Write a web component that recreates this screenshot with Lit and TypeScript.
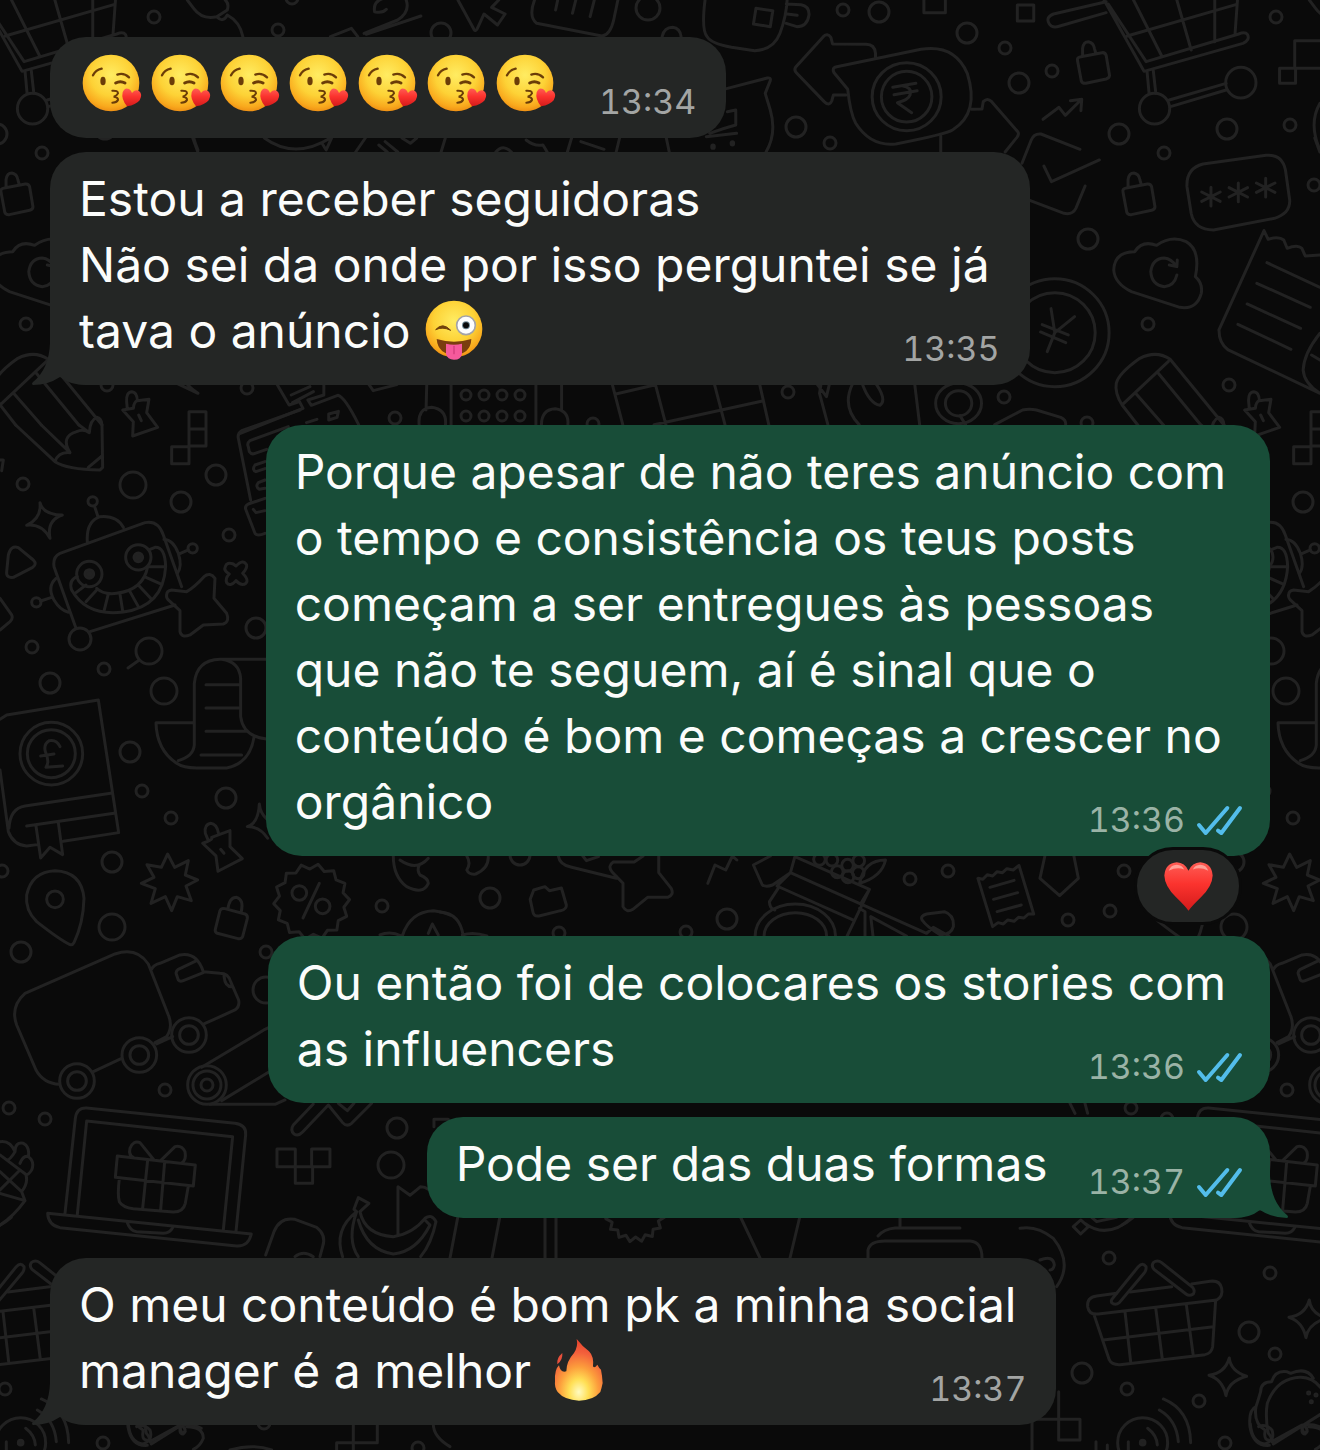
import { LitElement, html, svg, css } from "lit";
import { customElement } from "lit/decorators.js";

type Side = "in" | "out";

interface Message {
  side: Side;
  lines: unknown[];
  time: string;
  tail?: boolean;
  inline?: boolean;
  reaction?: boolean;
}

const TILE_WIDTH = 1122;

/* Loose rings of the wallpaper: x, y, radius. */
const RINGS: number[][] = [
  [23, 484, 6], [229, 535, 6], [32, 647, 6], [104, 669, 6], [142, 791, 6], [171, 818, 6],
  [107, 385, 6], [247, 388, 6], [2, 871, 6], [382, 906, 6], [266, 952, 6], [165, 1090, 6],
  [9, 1108, 6], [45, 1119, 6], [5, 1389, 6], [103, 1443, 6], [264, 1423, 6], [418, 1448, 6],
  [1109, 1258, 6], [1270, 1273, 6], [1275, 1354, 6], [1199, 1401, 6], [1110, 911, 6],
  [1068, 920, 6], [559, 933, 6], [686, 932, 6], [910, 879, 6], [948, 871, 6], [395, 418, 6],
  [593, 424, 6], [788, 392, 6], [1004, 397, 6], [1087, 423, 6], [843, 10, 6], [1005, 48, 6],
  [1052, 71, 6], [830, 143, 6], [42, 153, 6], [154, 17, 6], [168, 125, 6], [192, 185, 6],
  [26, 324, 6], [278, 30, 6], [292, -2, 6],
  [216, 475, 10], [181, 502, 10], [256, 628, 10], [50, 683, 10], [130, 752, 10], [226, 798, 10],
  [112, 862, 10], [21, 952, 10], [397, 1128, 10], [1249, 1332, 10], [1082, 1373, 10],
  [490, 898, 10], [727, 919, 10], [520, 855, 10], [879, 12, 10], [967, 33, 10], [1019, 83, 10],
  [796, 127, 10], [1119, 134, 10], [105, 129, 10], [1088, 239, 10], [441, 33, 10], [648, 8, 12],
  [133, 485, 13], [149, 651, 13], [164, 691, 13], [112, 927, 13], [266, 990, 13], [391, 1165, 13],
  [80, 639, 11],
  [466, 395, 5], [484, 395, 5], [502, 395, 5], [520, 395, 5],
  [466, 416, 5], [484, 416, 5], [502, 416, 5], [520, 416, 5],
];

const ring = (x: number, y: number, r: number) => svg`<circle cx=${x} cy=${y} r=${r} />`;
const oval = (x: number, y: number, rx: number, ry: number) =>
  svg`<ellipse cx=${x} cy=${y} rx=${rx} ry=${ry} />`;
const line = (d: string) => svg`<path d=${d} />`;

const scallop = (cx: number, cy: number, inner: number, outer: number, count: number) => {
  const points: string[] = [];
  for (let i = 0; i < count * 2; i++) {
    const r = i % 2 ? inner : outer;
    const a = (i * Math.PI) / count - 1.4;
    points.push(`${(cx + r * Math.cos(a)).toFixed(1)},${(cy + r * Math.sin(a)).toFixed(1)}`);
  }
  return svg`<polygon points=${points.join(" ")} />`;
};

const asterisk = (x: number, y: number) =>
  line(`M${x} ${y - 28}V${y + 28}M${x - 22} ${y - 14}L${x + 22} ${y + 14}M${x - 22} ${y + 14}L${x + 22} ${y - 14}`);

const LOCK =
  "M992 182Q990 172 1000 170L1050 158Q1058 157 1060 166L1068 226Q1068 234 1060 237L1012 250Q1003 251 1001 243ZM1004 168V145Q1006 125 1018 125Q1030 128 1032 145L1036 162";
const SPARK = "M868 660Q872 700 920 715Q865 730 858 773Q848 725 807 712Q855 705 868 660Z";

/* One repeat of the doodle wallpaper. */
const tile = () => svg`
  ${RINGS.map(([x, y, r]) => ring(x, y, r))}
  <g transform="scale(.4209 .3333)">
    ${line("M445 0L460 25Q480 60 515 50L540 30Q545 10 535 0M515 50Q530 70 540 45Q570 65 577 110")}
    ${line("M890 35Q885 0 920 -8M892 36Q910 40 918 28M965 0Q975 35 945 60L865 100M870 103L1000 48M785 110L835 85L850 110")}
    ${line("M1088 0L1126 88Q1130 96 1134 86L1150 42L1182 75L1200 42L1168 22L1185 0")}
    ${line("M1270 0Q1255 50 1275 70L1430 108Q1450 105 1458 60L1468 0M1325 0L1320 30M1368 0L1360 40M1412 0L1402 50")}
    ${line("M458 414L470 456M628 414Q700 480 785 414M765 430L775 450L788 414M868 414L845 456M900 435L920 456M915 425L945 456M955 414L975 430L990 414M1058 414L1048 456M1178 456Q1195 430 1215 456M1250 420Q1270 440 1290 435L1300 456M1358 414L1348 456M1380 425L1435 448M1472 414L1464 456")}
  </g>
  <g transform="translate(660 0) scale(.4209 .3333)">
    ${line("M1060 5L935 42Q915 52 925 72Q932 86 950 78L1060 38M1055 0L1150 214L1385 130Q1402 120 1396 104Q1390 94 1375 102L1155 185L1065 12M1125 0L1192 168M1228 0L1262 150M1318 0V125M1372 0L1366 105M1110 108L1368 14M1157 212L1162 280M1172 212L1178 280M1210 300L1345 250M1213 320L1345 270")}
    ${oval(1175, 326, 36, 46)}${oval(1380, 248, 36, 46)}
    ${line(LOCK)}
    <path d=${LOCK} transform="translate(108 394)" />
    ${line("M512 175V160Q510 133 490 133L410 132L406 112Q398 98 388 110L322 202Q318 210 324 218L390 305Q402 320 408 303L412 285L442 285")}
    ${line("M412 207Q412 202 420 200L620 148Q700 132 730 220Q760 340 695 390Q680 402 560 432Q500 440 465 370Q452 340 446 268L416 222Q410 214 412 207Z")}
    ${oval(586, 290, 82, 102)}${oval(586, 290, 60, 76)}
    ${line("M553 262L608 250M556 284L611 272M575 257Q600 262 594 285Q590 300 564 308L598 338")}
    ${line("M740 328L765 327L768 305Q778 292 788 305L850 395Q854 402 848 412L820 456M667 408V456")}
    ${line("M910 358L948 322L963 346L1000 300M975 302L1002 298L1000 332")}
    ${line("M158 266L255 234Q264 232 262 242L250 280L262 330Q278 400 252 456M160 335L180 330V375Q150 385 118 400M110 410L182 400M15 414L22 456")}
    <g class="solid">${oval(126, 440, 3, 5)}${oval(172, 430, 3, 5)}</g>
    ${line("M107 0Q98 90 112 110Q120 130 170 142L225 152Q270 150 285 100Q300 50 302 0M228 25L268 32L262 80L222 72ZM300 12L335 14Q355 18 354 45Q350 80 325 80L300 70M302 42L326 46M627 0V38H678V0M849 15H888V63H849Z")}
    ${line("M5 110Q10 82 30 82Q48 85 50 110")}
    ${line("M860 490L882 420Q888 400 905 402L998 448M912 498L930 545L1044 480M880 602L960 640Q980 645 988 625L1010 558")}
    ${line("M1290 492L1440 466Q1478 462 1486 510L1496 600Q1498 640 1460 655L1315 690Q1270 690 1262 640L1252 560Q1250 505 1290 492Z")}
    ${asterisk(1309, 590)}${asterisk(1374, 577)}${asterisk(1439, 563)}
    ${line("M1120 875Q1080 850 1078 810Q1080 755 1128 755Q1145 720 1180 736Q1215 705 1250 725Q1285 750 1272 830Q1290 850 1286 880Q1275 930 1235 922ZM1228 825Q1222 858 1198 860Q1168 855 1166 815Q1170 775 1198 774Q1215 776 1226 798M1210 795L1228 800L1229 780")}
    ${line("M1435 692L1328 990Q1328 1030 1350 1050L1568 1180M1435 692L1445 718Q1470 708 1482 720L1490 745Q1515 732 1525 745L1533 768L1568 765M1442 788L1568 862M1418 850L1545 922M1395 912L1522 985M1373 973L1499 1048M1568 1000Q1530 1060 1528 1110Q1530 1150 1568 1180M1548 1065L1568 1080")}
    ${oval(938, 998, 129, 162)}${oval(938, 998, 96, 120)}
    ${line("M929 926L938 998L985 950M938 998L920 1055M908 974L970 1005M904 996L964 1028")}
    ${line("M1135 1275L1098 1215Q1080 1180 1084 1150Q1090 1120 1140 1075Q1180 1050 1212 1078L1340 1275M1098 1215L1208 1084M1130 1180L1196 1275M1184 1120L1285 1275")}
    ${line("M1568 122H1508V205H1568M1472 205H1510V250H1472ZM1568 310Q1540 370 1568 450")}
  </g>
  <g transform="translate(0 380) scale(.3333)">
    ${line("M47 135L165 245Q200 268 300 270L308 262L306 135Q305 115 290 112M124 135L210 218M237 135L268 158M165 245Q175 215 210 218Q180 170 230 155Q250 145 268 158Q270 120 290 113M265 262L306 228")}
    ${line("M382 88L380 65Q378 36 396 35Q412 37 412 62M368 90L400 85Q402 65 412 62L447 58L440 98L473 142L398 168L400 125ZM416 105L424 122")}
    ${line("M567 95H618V198H567ZM567 147H618M515 200H567V251H515Z")}
    ${line("M900 90L725 152Q712 160 715 175L752 360M865 140L750 182Q740 190 745 200L748 215Q755 225 765 220L800 208M795 245L765 255Q755 270 768 275L795 266M795 300L775 308Q765 320 778 328L795 325M795 355L745 372Q733 378 738 390L765 460Q772 470 795 460M760 388L768 398L795 392")}
    ${line("M120 368Q130 405 187 405Q140 420 150 475Q125 430 80 436Q125 415 120 368Z")}
    ${line("M25 525Q32 495 55 503L100 540Q112 552 98 562L40 592Q18 595 20 575Z")}
    ${line("M0 655L35 705Q40 715 30 725L0 750M0 240H10L5 272")}
    ${line("M228 745L162 560Q158 530 180 520L435 428Q475 420 490 465L545 620M270 755L525 675M262 485Q258 425 300 410Q350 405 370 442M284 380L294 410")}
    ${ring(278, 364, 14)}${ring(268, 582, 38)}${ring(415, 532, 38)}
    <g class="solid">${ring(268, 582, 13)}${ring(415, 532, 13)}</g>
    ${line("M232 590Q205 600 215 630Q260 710 370 696Q490 680 497 560Q495 500 465 502L450 508M290 625Q310 645 350 640Q430 630 443 560M228 638L258 615M258 665L292 628M313 690L325 642M368 692L360 642M415 680L390 635M452 655L415 615M482 612L438 592M497 560H445")}
    ${line("M168 595Q140 620 162 660Q180 690 205 697M122 663L155 652M492 478Q520 480 535 520Q548 560 532 580M538 522L565 510")}
    ${ring(109, 667, 14)}${ring(578, 505, 14)}
    ${line("M500 645Q500 632 515 630L560 635Q585 620 612 590Q630 575 645 595L642 655L680 700Q690 725 670 732L610 735L570 765Q545 775 540 755V692L505 660Q498 652 500 645Z")}
    ${line("M676 560Q680 545 700 552L708 558Q730 535 740 555Q742 565 728 580Q748 600 738 610Q725 620 708 602Q690 622 680 608Q675 595 688 582Q670 572 676 560Z")}
    ${line("M418 840L384 864")}
    ${line("M800 838H660Q590 840 583 910V1095Q580 1130 535 1142M665 838Q718 845 722 895V1010Q730 1070 800 1077M583 1028H468Q470 1110 530 1150Q550 1164 590 1164H680Q750 1150 762 1072M618 914H718M618 984H718M618 1054H740M603 1125H725")}
    ${line("M0 1018L20 1005L295 960L356 1358L190 1384M0 1170L25 1355Q40 1395 80 1398L112 1394M332 1240L75 1278Q30 1285 27 1345M342 1300L80 1338M108 1338L122 1434L150 1402L188 1424L175 1328")}
    ${ring(154, 1121, 94)}${ring(154, 1121, 72)}
    ${line("M180 1100Q170 1078 148 1082Q130 1092 136 1115Q150 1145 138 1162L188 1158M122 1128L162 1122")}
    ${line("M803 1320Q780 1300 778 1272Q775 1330 742 1340Q780 1340 803 1375")}
    ${line("M625 1382L616 1360Q612 1334 632 1330Q650 1332 655 1358M608 1390Q640 1380 635 1372L690 1352V1400L727 1436L654 1474L648 1428ZM662 1408L672 1420")}
  </g>
  <g transform="translate(0 840) scale(.3333)">
    ${line("M503 42L524 82L565 62L556 105L593 120L558 138L574 182L532 170L515 212L496 170L453 190L466 146L424 130L462 112L441 74L484 82Z")}
    ${line("M210 314Q180 300 110 245Q75 210 80 165Q95 95 165 92Q245 95 252 175Q250 250 222 308Q218 316 210 314Z")}
    ${ring(165, 178, 25)}
    ${line("M660 212Q664 203 675 206L735 222Q744 226 742 236L728 290Q724 298 714 296L652 280Q644 276 646 268ZM684 207Q688 172 710 172Q732 178 724 215")}
    ${scallop(935, 185, 98, 114, 14)}
    ${ring(898, 159, 22)}${ring(968, 199, 22)}
    ${line("M958 130L909 234M1180 48Q1180 110 1220 140Q1270 165 1285 130Q1285 115 1260 105Q1250 90 1258 75M1200 60Q1250 95 1285 55M1207 288Q1230 215 1300 212Q1330 215 1350 225M1285 280L1297 252L1315 285M1140 285Q1170 272 1205 288")}
    ${line("M178 733Q130 730 108 690L50 555Q30 500 75 460L345 342Q410 320 445 372L505 525Q520 560 500 590L465 608M280 695L365 655M455 388Q460 375 480 370L540 345Q590 335 610 395L660 400Q685 400 692 425L716 480Q720 500 705 510L612 552M590 362L535 388Q525 395 530 405L535 420Q540 426 550 422L610 398M672 408Q675 440 695 440M518 590L470 612")}
    ${ring(231, 723, 52)}${ring(231, 723, 28)}${ring(418, 645, 52)}${ring(418, 645, 28)}${ring(567, 585, 52)}${ring(567, 585, 28)}
    ${ring(621, 735, 58)}${ring(621, 735, 42)}${ring(621, 735, 18)}
    ${line("M605 682L795 568L820 556M665 782L820 688M630 793H825L855 780")}
    ${line("M940 792L880 855Q870 870 882 882Q895 890 908 876L985 795L1028 848Q1040 862 1055 850L1115 790M1015 790L1042 812L1062 790")}
  </g>
  <g transform="translate(0 1080) scale(.3333)">
    ${line("M195 400L226 115Q230 82 260 84L705 130Q740 135 737 165L708 455M232 403L260 123L698 170L670 450M143 400L754 462Q745 500 710 498L180 443Q145 435 143 400ZM382 428Q390 452 410 455L490 460Q510 460 518 443")}
    ${line("M352 228L586 255L580 318L346 292ZM358 296Q352 345 358 365Q368 382 400 386L520 396Q550 396 556 370L565 318M443 240L428 385M494 246L482 390M462 240L420 188Q400 180 390 205Q385 225 400 232M482 242L525 200Q545 195 555 215Q560 240 545 250")}
    ${line("M831 207H886V260H831ZM935 207H990V260H935ZM886 260H938V310H886ZM1345 118H1302V140")}
    ${line("M0 185Q30 180 45 215Q45 185 70 190Q90 200 85 230Q105 245 95 270Q85 285 78 285Q85 310 65 335L75 362Q40 410 0 435M0 340L75 362M0 225L80 285M0 330L60 270M0 275L65 335M45 215Q30 240 20 240M85 230Q70 225 60 250")}
    ${line("M797 525L822 455Q840 410 885 418L950 442Q980 465 968 500L960 530M885 530Q910 510 940 530")}
    ${line("M1070 395L1062 388L1075 353L1107 370L1080 395Q1095 465 1180 470Q1240 460 1275 415Q1295 400 1308 425Q1295 490 1262 530M1070 395Q1000 450 1028 530M1070 395Q1040 480 1075 530M1075 420Q1100 510 1180 522Q1250 515 1290 435L1275 420M1194 465V320L1230 346L1262 320Q1275 320 1285 328")}
    ${line("M385 1032Q390 1090 430 1092Q460 1080 450 1050Q430 1030 410 1040M450 1085L540 1035M540 1045Q545 1065 555 1055M560 1040Q610 1040 610 1075Q600 1100 580 1108M690 1110Q760 1090 815 1110M1060 1032V1110M1132 1032V1088H1010V1110M1300 1032Q1300 1070 1350 1100")}
  </g>
  <g transform="translate(1020 1080) scale(.3333)">
    ${line("M290 640L230 648Q200 652 203 680Q207 705 235 702L590 660Q610 650 605 625Q600 600 570 604L515 612M330 636L455 620M222 704L268 840Q275 855 300 854L555 824Q575 820 578 800L587 660M250 780L580 740M315 695L332 845M407 683L427 838M499 674L520 828")}
    ${line("M278 655L355 560Q368 545 378 560Q380 570 372 580L298 668Q285 678 275 668Q272 660 278 655ZM400 548Q412 538 425 548L518 622Q526 632 520 642Q508 650 498 642L402 568Q393 558 400 548Z")}
    ${line(SPARK)}
    <path d=${SPARK} transform="translate(-240 174)" />
    ${ring(368, 1088, 75)}
    <g class="solid">${ring(368, 1088, 7)}${ring(866, 939, 3)}${ring(888, 945, 3)}${ring(874, 965, 3)}</g>
    ${line("M383 1045Q410 1065 412 1095M418 990Q470 1020 475 1085M430 957Q510 990 512 1088M228 1085V1110M262 1095V1110M325 1085V1110")}
    ${line("M760 1092L935 982Q900 890 840 892Q770 895 742 970Q735 1010 745 1060Q755 1070 760 1092ZM748 1096Q700 1100 690 1040Q685 990 708 980Q715 960 722 935Q722 905 755 905Q765 870 800 875L812 880Q860 860 880 895M708 980Q700 1030 735 1050M850 1035Q840 1060 855 1062Q870 1050 850 1035Q880 1030 910 1045M735 1055Q730 1085 755 1080")}
    ${line("M0 445Q50 435 100 475Q160 550 110 620M60 540Q100 525 103 555Q100 570 90 570M160 440L182 420L205 440L182 462ZM195 430Q260 480 340 412M215 412L230 425L290 412M150 70L165 100M195 70L203 100M36 1110V1018M116 935V1080H180V1018H0")}
  </g>
  <g transform="translate(440 840) scale(.4464 .3333)">
    ${line("M60 48Q70 70 60 90Q65 105 80 102Q110 85 108 48M265 48Q268 75 295 82L395 115M320 48L328 62L355 50M455 48L435 66H388Q375 78 385 95L410 130V200Q418 220 432 208L465 172H510Q525 165 518 145L490 98V48M600 130L616 75L640 90L655 48L665 60")}
    ${line("M740 48L702 75L722 135Q730 142 745 135L785 98L795 50L962 148L942 192L785 98L755 138L925 240M962 148L912 288M942 192L1090 280L1105 262L1140 288M965 230L970 288M965 230L1045 288M940 205L952 215V288M760 140L738 185Q738 205 750 210M1080 240Q1075 228 1090 222L1130 215Q1152 225 1150 260Q1145 285 1120 284Q1090 260 1080 240M940 130Q950 60 998 60Q990 110 940 130")}
    ${line("M202 178L210 150L235 140L245 152L272 144L283 195Q284 208 270 212L222 228Q210 230 208 215Z")}
    ${line("M1205 115L1216 118L1226 104L1238 108L1248 95L1260 98L1270 86L1284 90L1297 76L1330 222L1318 222L1308 234L1296 232L1286 244L1272 240L1262 252L1250 248L1238 260ZM1232 142L1286 121M1240 178L1294 158M1248 215L1302 195M1355 48L1344 115L1388 167L1430 115L1420 48M0 216Q45 220 52 288M50 285Q75 275 105 288")}
    ${oval(796, 288, 90, 96)}${oval(796, 288, 70, 70)}
    ${[[850, 58], [878, 60], [890, 95], [913, 76], [937, 98], [914, 110], [938, 62]].map(([x, y]) => oval(x, y, 13, 18))}
  </g>
  <g transform="translate(230 370) scale(.6952 .3333)">
    ${line("M550 44L565 164M612 44L627 164M555 72L612 44M697 44L712 164M762 44L775 164M610 164L766 93M283 44L282 120M318 44V164M440 44V164M477 44V120M272 164Q270 115 290 112Q312 118 310 164M448 164Q448 118 468 116Q488 122 486 164")}
    ${line("M68 44L85 105L100 95L105 115L15 190M135 44V75L112 90L117 106L155 76Q165 80 185 164M88 75L115 50M90 98L120 65M110 158L125 148M142 132L156 124L154 142L142 150ZM200 44L206 62L240 44")}
    ${line("M850 44L848 70L860 164M845 44L858 80L862 44M895 44Q880 110 905 164M910 44Q920 100 935 106Q945 90 930 44M985 44L992 164M1050 137L1058 164M1100 164L1140 120Q1150 115 1160 120L1195 142Q1203 150 1202 164")}
    ${oval(1048, 100, 33, 61)}${oval(1048, 100, 19, 38)}
  </g>
  ${line("M450 1258L458 1216M492 1258L500 1216M545 1258V1216M556 1216V1258M868 1258V1250Q870 1241 885 1241H970Q982 1242 982 1258M878 1236Q884 1229 895 1228H960M900 1216V1228M800 1216L790 1258M740 1216L760 1258")}
  ${scallop(635, 1212, 25, 30, 16)}
`;

const kiss = () => html`<svg class="emoji" viewBox="0 0 180 180" role="img" aria-label="😘">
  <circle cx="90" cy="90" r="85" fill="url(#face)" />
  <g fill="none" stroke="#6b3d08" stroke-width="7" stroke-linecap="round">
    <path d="M36 67Q44 51 62 47" /><path d="M109 65Q128 58 144 73" />
    <path d="M104 90Q118 82 132 90" stroke-width="9" />
    <path d="M94 113Q111 112 111 121Q107 129 98 131Q112 133 111 141Q107 149 94 149" stroke-width="6" />
  </g>
  <ellipse cx="66" cy="84" rx="8" ry="13" fill="#6b3d08" />
  <path d="M138 160Q120 138 125 118Q131 102 144 108Q151 112 153 120Q162 107 174 114Q186 124 176 142Q165 156 138 160Z" fill="url(#heart)" />
</svg>`;

const tongue = () => html`<svg class="emoji inline" viewBox="0 0 180 180" role="img" aria-label="😜">
  <circle cx="90" cy="90" r="85" fill="url(#face)" />
  <path d="M35 92Q56 68 80 94Q56 82 35 92Z" fill="#70410c" stroke="#70410c" stroke-width="3" stroke-linejoin="round" />
  <circle cx="126" cy="79" r="28" fill="#fdfdfd" stroke="#a3a3a8" stroke-width="5" />
  <circle cx="126" cy="79" r="12" fill="#6e8794" /><circle cx="126" cy="79" r="9" fill="#08080a" />
  <path d="M38 120Q90 136 142 120Q140 165 90 168Q42 165 38 120Z" fill="#7a3d0e" />
  <path d="M66 134V165Q70 182 90 182Q112 182 114 164V134Q90 140 66 134Z" fill="#f65a9c" />
  <path d="M90 142V164" stroke="#d33c7c" stroke-width="4" stroke-linecap="round" />
</svg>`;

const fire = () => html`<svg class="emoji inline tall" viewBox="0 0 180 192" role="img" aria-label="🔥">
  <path d="M83 3Q100 25 120 40Q135 55 132 85Q136 92 145 80Q150 90 156 95Q160 115 161 135Q158 150 154 162Q132 188 90 188Q46 186 26 162Q16 148 18 130Q16 95 30 82Q34 105 52 100Q52 70 75 45Q88 25 83 3Z" fill="url(#flame)" />
  <path d="M40 45Q22 60 25 79Q42 66 40 45Z" fill="#e8503c" />
</svg>`;

const heart = () => html`<svg class="heart" viewBox="0 0 146 146" role="img" aria-label="❤️">
  <path d="M73 145Q62 130 36 105Q2 72 1 40Q4 4 38 1Q62 2 73 26Q84 2 108 1Q142 4 145 40Q144 72 110 105Q84 130 73 145Z" fill="url(#heart)" />
  <path d="M14 26Q20 8 38 8Q54 9 60 22Q38 14 14 26ZM86 22Q92 9 108 8Q126 8 132 26Q108 14 86 22Z" fill="#ffb9b0" opacity=".75" />
</svg>`;

const ticks = () => html`<svg class="ticks" viewBox="0 0 141 93" role="img" aria-label="Lida">
  <path d="M9 60L29 84L94 9M66 77L76 84L132 9" />
</svg>`;

const THREADS: Message[][] = [
  [
    { side: "in", lines: [html`<span class="row">${Array.from({ length: 7 }, kiss)}</span>`], time: "13:34", inline: true },
    {
      side: "in",
      lines: ["Estou a receber seguidoras", "Não sei da onde por isso perguntei se já", html`tava o anúncio ${tongue()}`],
      time: "13:35",
      tail: true,
    },
  ],
  [
    {
      side: "out",
      lines: [
        "Porque apesar de não teres anúncio com",
        "o tempo e consistência os teus posts",
        "começam a ser entregues às pessoas",
        "que não te seguem, aí é sinal que o",
        "conteúdo é bom e começas a crescer no",
        "orgânico",
      ],
      time: "13:36",
      reaction: true,
    },
    { side: "out", lines: ["Ou então foi de colocares os stories com", "as influencers"], time: "13:36" },
    { side: "out", lines: ["Pode ser das duas formas"], time: "13:37", tail: true, inline: true },
  ],
  [
    {
      side: "in",
      lines: ["O meu conteúdo é bom pk a minha social", html`manager é a melhor ${fire()}`],
      time: "13:37",
      tail: true,
    },
  ],
];

@customElement("app-root")
export class AppRoot extends LitElement {
  static styles = css`
    :host {
      display: block;
      position: relative;
      min-height: 100vh;
      overflow: hidden;
      background: #0a0a0a;
      font-family: Inter, "Liberation Sans", sans-serif;
      color: #fbfcfb;
    }
    * { box-sizing: border-box; }
    .wallpaper {
      position: absolute;
      inset: 0;
      width: 100%;
      height: 100%;
      fill: none;
      stroke: #222222;
      stroke-width: 3px;
      stroke-linecap: round;
      stroke-linejoin: round;
    }
    .wallpaper path, .wallpaper circle, .wallpaper ellipse, .wallpaper polygon {
      vector-effect: non-scaling-stroke;
    }
    .wallpaper .solid { fill: #222222; }
    .chat {
      position: relative;
      display: flex;
      flex-direction: column;
      gap: 40px;
      padding: 37px 50px 26px;
    }
    .thread {
      display: flex;
      flex-direction: column;
      gap: 14px;
      margin: 0;
      padding: 0;
      list-style: none;
    }
    .bubble {
      position: relative;
      display: grid;
      align-self: flex-start;
      max-width: 100%;
      padding: 0 30px 0 29px;
      border-radius: 36px;
      background: var(--fill);
      --fill: #242625;
      --muted: #a3a5a4;
    }
    .bubble.out {
      align-self: flex-end;
      padding-right: 27px;
      --fill: #184d38;
      --muted: #9ab3a6;
    }
    .bubble.reacted { margin-bottom: 66px; }
    .text {
      position: relative;
      grid-area: 1 / 1;
      margin: 0;
      padding: 14px 10px 21px 0;
      font-size: 48px;
      line-height: 66px;
    }
    .out .text { padding-right: 17px; }
    .line { display: block; min-height: 66px; }
    .meta {
      position: relative;
      grid-area: 1 / 1;
      place-self: end;
      display: flex;
      align-items: center;
      gap: 11px;
      padding-bottom: 16px;
      font-size: 34px;
      line-height: 40px;
      font-variant-numeric: tabular-nums;
      color: var(--muted);
    }
    .bubble.single {
      display: flex;
      justify-content: space-between;
      align-items: flex-end;
      gap: 40px;
    }
    .single .text { padding-right: 0; }
    .single .meta { align-self: flex-end; }
    .row { display: flex; gap: 9px; padding: 2px 4px 0 2px; }
    .emoji { display: block; width: 60px; height: 60px; overflow: visible; }
    .emoji.inline { display: inline-block; margin: -12px 0; vertical-align: 1px; }
    .emoji.tall { height: 64px; margin-left: 4px; vertical-align: -2px; }
    .ticks {
      width: 47px;
      height: 31px;
      fill: none;
      stroke: #53bdeb;
      stroke-width: 12;
      stroke-linecap: round;
      stroke-linejoin: round;
    }
    .tail {
      position: absolute;
      bottom: 0;
      left: -18px;
      width: 54px;
      height: 50px;
      fill: var(--fill);
    }
    .out .tail { left: auto; right: -18px; transform: scaleX(-1); }
    .reaction {
      position: absolute;
      right: 28px;
      bottom: -69px;
      display: flex;
      align-items: center;
      justify-content: center;
      width: 108px;
      height: 78px;
      padding: 0;
      border: 3px solid #0a0a0a;
      border-radius: 39px;
      background: #242625;
    }
    .heart { width: 49px; height: 49px; }
  `;

  private bubble(m: Message) {
    return html`<li class="bubble ${m.side} ${m.inline ? "single" : ""} ${m.reaction ? "reacted" : ""}">
      ${m.tail
        ? html`<svg class="tail" viewBox="0 0 54 50" aria-hidden="true">
            <path d="M18 0V8Q17 34 1 47Q-1 49 1 50Q16 50 28 42Q38 50 54 50V0Z" />
          </svg>`
        : null}
      <p class="text">${m.lines.map((l) => html`<span class="line">${l}</span>`)}</p>
      <span class="meta"><time>${m.time}</time>${m.side === "out" ? ticks() : null}</span>
      ${m.reaction ? html`<button class="reaction" type="button" aria-label="Reação">${heart()}</button>` : null}
    </li>`;
  }

  render() {
    return html`
      <svg class="wallpaper" aria-hidden="true">
        <defs>
          <radialGradient id="face" cx=".5" cy=".36" r=".66">
            <stop offset="0" stop-color="#ffec62" />
            <stop offset=".55" stop-color="#fdd236" />
            <stop offset=".85" stop-color="#f9a91d" />
            <stop offset="1" stop-color="#ec8a12" />
          </radialGradient>
          <linearGradient id="heart" x1="0" y1="0" x2="0" y2="1">
            <stop offset="0" stop-color="#ff5d55" />
            <stop offset=".45" stop-color="#fb332e" />
            <stop offset="1" stop-color="#d41b1b" />
          </linearGradient>
          <radialGradient id="flame" cx=".5" cy=".86" r=".82">
            <stop offset="0" stop-color="#fffbc0" />
            <stop offset=".25" stop-color="#ffdf55" />
            <stop offset=".5" stop-color="#fc9e3c" />
            <stop offset=".78" stop-color="#f3603c" />
            <stop offset="1" stop-color="#e9472f" />
          </radialGradient>
        </defs>
        ${[-1, 0, 1].map((n) => svg`<g transform=${`translate(${n * TILE_WIDTH} 0)`}>${tile()}</g>`)}
      </svg>
      <main class="chat">
        ${THREADS.map((t) => html`<ol class="thread">${t.map((m) => this.bubble(m))}</ol>`)}
      </main>
    `;
  }
}
